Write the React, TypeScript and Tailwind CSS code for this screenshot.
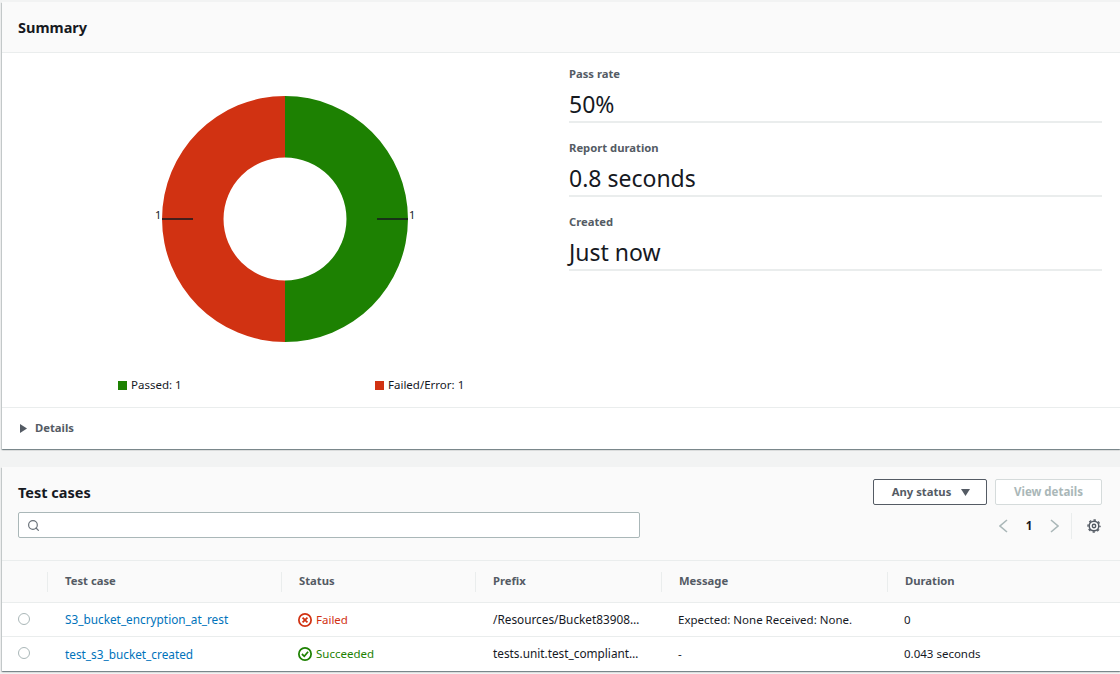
import React from "react";
import { Search } from "lucide-react";

const font = "font-['Noto_Sans','Open_Sans',sans-serif]";

function Stat({ label, value }: { label: string; value: string }) {
  return (
    <div className="border-b-2 border-[#eaeded] mb-[17px] pb-[1px]">
      <div className="text-[11.25px] leading-[16px] font-bold text-[#545b64]">{label}</div>
      <div className="text-[23px] leading-[32px] mt-[6px] text-[#16191f]">{value}</div>
    </div>
  );
}

function Donut() {
  return (
    <svg width="566" height="306" viewBox="0 0 566 306" className="block">
      <path d="M283 43 A123 123 0 0 1 283 289 L283 227.5 A61.5 61.5 0 0 0 283 104.5 Z" fill="#1d8102" />
      <path d="M283 43 A123 123 0 0 0 283 289 L283 227.5 A61.5 61.5 0 0 1 283 104.5 Z" fill="#d13212" />
      <path d="M375 166 H406 M160 166 H191" stroke="#16191f" strokeWidth="1.5" />
      <text x="407" y="166" fontSize="11" fill="#16191f" fontFamily="Noto Sans">1</text>
      <text x="153" y="166" fontSize="11" fill="#16191f" fontFamily="Noto Sans">1</text>
    </svg>
  );
}

function Legend({ color, label }: { color: string; label: string }) {
  return (
    <div className="flex items-center gap-[4px] text-[11.5px] leading-[16px] text-[#16191f]">
      <span className={`w-[9px] h-[9px] ${color}`} />
      <span>{label}</span>
    </div>
  );
}

function Radio() {
  return (
    <div className="flex justify-start pl-[16px] items-center mb-[2px]">
      <span className="w-[12px] h-[12px] rounded-full border border-[#aab7b8] bg-white" />
    </div>
  );
}

const gridCols = "grid grid-cols-[45px_234px_194px_186px_226px_1fr]";

function Head({ label }: { label: string }) {
  return (
    <div className="flex items-center h-[20px]">
      <span className="w-px h-[20px] bg-[#eaeded]" />
      <span className="pl-[17px]">{label}</span>
    </div>
  );
}

function FailedIcon() {
  return (
    <svg width="14" height="14" viewBox="0 0 16 16" fill="none" stroke="#d13212" strokeWidth="2">
      <circle cx="8" cy="8" r="7" />
      <path d="M5.2 5.2 L10.8 10.8 M10.8 5.2 L5.2 10.8" />
    </svg>
  );
}

function OkIcon() {
  return (
    <svg width="14" height="14" viewBox="0 0 16 16" fill="none" stroke="#1d8102" strokeWidth="2">
      <circle cx="8" cy="8" r="7" />
      <path d="M4.5 8 L7.2 10.6 L11.5 5.4" />
    </svg>
  );
}

function Gear() {
  return (
    <svg width="14" height="14" viewBox="0 0 14 14" fill="none" stroke="#545b64">
      <circle cx="7" cy="7" r="4.8" strokeWidth="1.5" />
      <circle cx="7" cy="7" r="6" strokeWidth="1.4" strokeDasharray="2.4 2.31" strokeDashoffset="1.2" />
      <circle cx="7" cy="7" r="1.7" strokeWidth="1.4" />
    </svg>
  );
}

function Chevron({ dir }: { dir: "left" | "right" }) {
  return (
    <svg width="9" height="14" viewBox="0 0 9 14" fill="none" stroke="#aab7b8" strokeWidth="1.6">
      <path d={dir === "left" ? "M8 1 L1 7 L8 13" : "M1 1 L8 7 L1 13"} />
    </svg>
  );
}

export default function App() {
  return (
    <div className={`${font} w-[1120px] h-[674px] overflow-hidden bg-[#f2f3f3] pt-[2px] pl-[2px]`}>
      <section className="bg-white h-[447px] shadow-[0_1px_1px_0_rgba(0,28,36,0.3),1px_1px_1px_0_rgba(0,28,36,0.15),-1px_1px_1px_0_rgba(0,28,36,0.15)]">
        <header className="h-[51px] bg-[#fafafa] border-b border-[#eaeded] flex items-center pl-[16px] pt-[1px]">
          <h2 className="text-[14.5px] font-bold text-[#16191f]">Summary</h2>
        </header>
        <div className="flex h-[355px] border-b border-[#eaeded]">
          <div className="w-[567px] shrink-0">
            <Donut />
            <div className="grid grid-cols-[257px_257px] pl-[116px] mt-[18px]">
              <Legend color="bg-[#1d8102]" label="Passed: 1" />
              <Legend color="bg-[#d13212]" label="Failed/Error: 1" />
            </div>
          </div>
          <div className="w-[533px] pt-[13px]">
            <Stat label="Pass rate" value="50%" />
            <Stat label="Report duration" value="0.8 seconds" />
            <Stat label="Created" value="Just now" />
          </div>
        </div>
        <div className="flex items-center h-[41px] pl-[18px] gap-[8px] text-[11.25px] font-bold text-[#545b64]">
          <svg width="7" height="9" viewBox="0 0 7 9"><path d="M0 0 L7 4.5 L0 9 Z" fill="#545b64" /></svg>
          <span>Details</span>
        </div>
      </section>

      <section className="mt-[18px] bg-white h-[204px] shadow-[0_1px_1px_0_rgba(0,28,36,0.3),1px_1px_1px_0_rgba(0,28,36,0.15),-1px_1px_1px_0_rgba(0,28,36,0.15)]">
        <header className="h-[94px] bg-[#fafafa] border-b border-[#eaeded] flex justify-between pl-[16px] pr-[18px] pt-[12px]">
          <div className="w-[622px]">
            <h2 className="text-[14.5px] leading-[24px] font-bold text-[#16191f] mt-[1px]">Test cases</h2>
            <div className="h-[26px] mt-[8px] bg-white border border-[#aab7b8] rounded-[2px] flex items-center pl-[8px]">
              <Search size={13} strokeWidth={2.2} className="text-[#687078]" />
            </div>
          </div>
          <div className="flex flex-col items-end">
            <div className="flex gap-[8px]">
              <button className="w-[114px] h-[26px] bg-white border border-[#545b64] rounded-[2px] flex items-center justify-center gap-[10px] text-[11.25px] font-bold text-[#545b64] pl-[2px]">
                <span>Any status</span>
                <svg width="9" height="7" viewBox="0 0 9 7"><path d="M0 0 H9 L4.5 7 Z" fill="#545b64" /></svg>
              </button>
              <button className="w-[107px] h-[26px] bg-white border border-[#d5dbdb] rounded-[2px] text-[11.5px] font-bold text-[#aab7b8]">View details</button>
            </div>
            <div className="flex items-center h-[26px] mt-[8px] mr-[1px] text-[#16191f]">
              <Chevron dir="left" />
              <span className="text-[11.5px] font-bold w-[42px] text-center">1</span>
              <Chevron dir="right" />
              <span className="w-px h-[26px] bg-[#eaeded] ml-[12px] mr-[15px]" />
              <Gear />
            </div>
          </div>
        </header>
        <div className={`${gridCols} h-[42px] items-center bg-[#fafafa] border-b border-[#eaeded] text-[11.25px] font-bold text-[#545b64]`}>
          <div />
          <Head label="Test case" />
          <Head label="Status" />
          <Head label="Prefix" />
          <Head label="Message" />
          <Head label="Duration" />
        </div>
        <div className={`${gridCols} h-[34px] items-center border-b border-[#eaeded] text-[11.5px] text-[#16191f]`}>
          <Radio />
          <a className="pl-[18px] pt-[1px] text-[11.8px] text-[#0073bb]">S3_bucket_encryption_at_rest</a>
          <div className="pl-[17px] flex items-center gap-[4px] text-[#d13212]"><FailedIcon />Failed</div>
          <div className="pl-[18px] text-[11.8px]">/Resources/Bucket83908…</div>
          <div className="pl-[17px]">Expected: None Received: None.</div>
          <div className="pl-[17px]">0</div>
        </div>
        <div className={`${gridCols} h-[34px] items-center text-[11.5px] text-[#16191f]`}>
          <Radio />
          <a className="pl-[18px] pt-[1px] text-[11.8px] text-[#0073bb]">test_s3_bucket_created</a>
          <div className="pl-[17px] flex items-center gap-[4px] text-[#1d8102]"><OkIcon />Succeeded</div>
          <div className="pl-[18px] text-[11.8px]">tests.unit.test_compliant…</div>
          <div className="pl-[17px]">-</div>
          <div className="pl-[17px]">0.043 seconds</div>
        </div>
      </section>
    </div>
  );
}
